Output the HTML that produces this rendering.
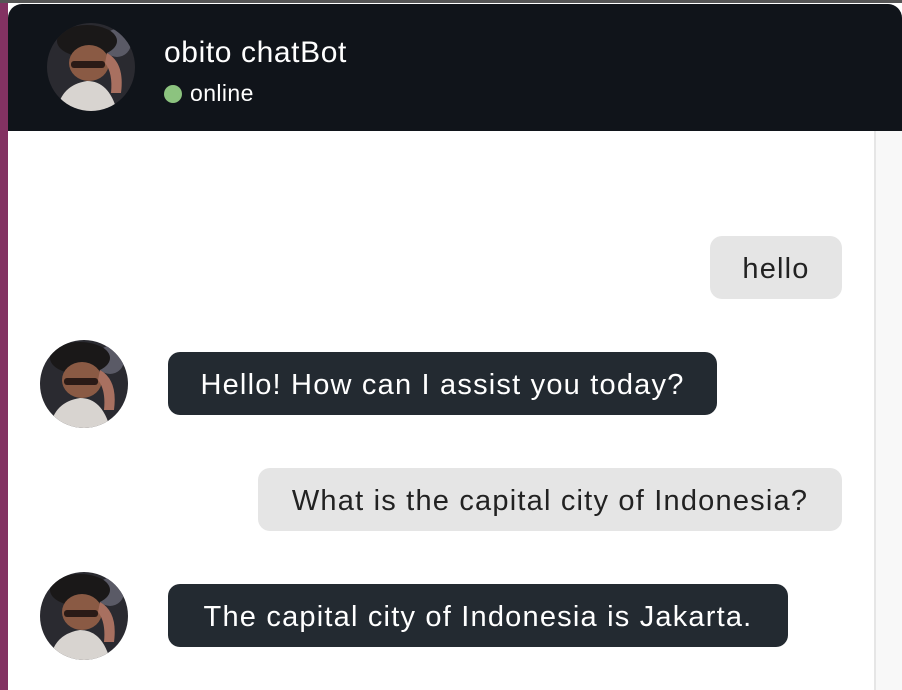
<!DOCTYPE html>
<html><head><style>
body{margin:0;width:902px;height:690px;overflow:hidden;background:#fff;font-family:"Liberation Sans",sans-serif;position:relative}
.top{position:absolute;left:0;top:0;width:902px;height:3px;background:#555}
.strip{position:absolute;left:0;top:3px;width:8px;height:687px;background:#833262}
.hdr{position:absolute;left:8px;top:4px;width:894px;height:127px;background:#10141a;border-radius:14px 14px 0 0}
.sb{position:absolute;left:874px;top:131px;width:28px;height:559px;background:#f8f8f8;border-left:2px solid #e6e6e6}
.av{position:absolute;border-radius:50%;overflow:hidden}
.name{position:absolute;left:164px;top:36px;color:#fff;font-size:30px;letter-spacing:0.6px}
.on{position:absolute;left:164px;top:80px;color:#fff;font-size:23px;letter-spacing:0.4px}
.dot{display:inline-block;width:18px;height:18px;border-radius:50%;background:#8cc37f;vertical-align:-2px;margin-right:8px}
.b{position:absolute;height:63px;line-height:66px;border-radius:12px;font-size:29px;text-align:center;letter-spacing:1.2px;white-space:nowrap}
.u{background:#e5e5e5;color:#222}
.k{background:#232a31;color:#fff}
</style></head><body>
<div class="top"></div><div class="strip"></div>
<div class="hdr"></div>
<div class="sb"></div>
<svg width="0" height="0" style="position:absolute"><defs>
<symbol id="a" viewBox="0 0 88 88">
<rect width="88" height="88" fill="#2a2a30"/>
<circle cx="70" cy="20" r="14" fill="#5a5a66"/>
<ellipse cx="40" cy="18" rx="30" ry="16" fill="#1a1818"/>
<ellipse cx="42" cy="40" rx="20" ry="18" fill="#8a5a44"/>
<rect x="24" y="38" width="34" height="7" rx="3" fill="#2a1a16"/>
<path d="M60 30 Q78 40 74 70 L64 70 Q66 50 58 40Z" fill="#a87060"/>
<path d="M10 88 Q14 62 40 58 Q62 58 70 88Z" fill="#d8d4d0"/>
</symbol></defs></svg>
<svg class="av" style="left:47px;top:23px" width="88" height="88"><use href="#a"/></svg>
<div class="name">obito chatBot</div>
<div class="on"><span class="dot"></span>online</div>
<div class="b u" style="left:710px;top:236px;width:132px">hello</div>
<svg class="av" style="left:40px;top:340px" width="88" height="88"><use href="#a"/></svg>
<div class="b k" style="left:168px;top:352px;width:549px">Hello! How can I assist you today?</div>
<div class="b u" style="left:258px;top:468px;width:584px">What is the capital city of Indonesia?</div>
<svg class="av" style="left:40px;top:572px" width="88" height="88"><use href="#a"/></svg>
<div class="b k" style="left:168px;top:584px;width:620px">The capital city of Indonesia is Jakarta.</div>
</body></html>
